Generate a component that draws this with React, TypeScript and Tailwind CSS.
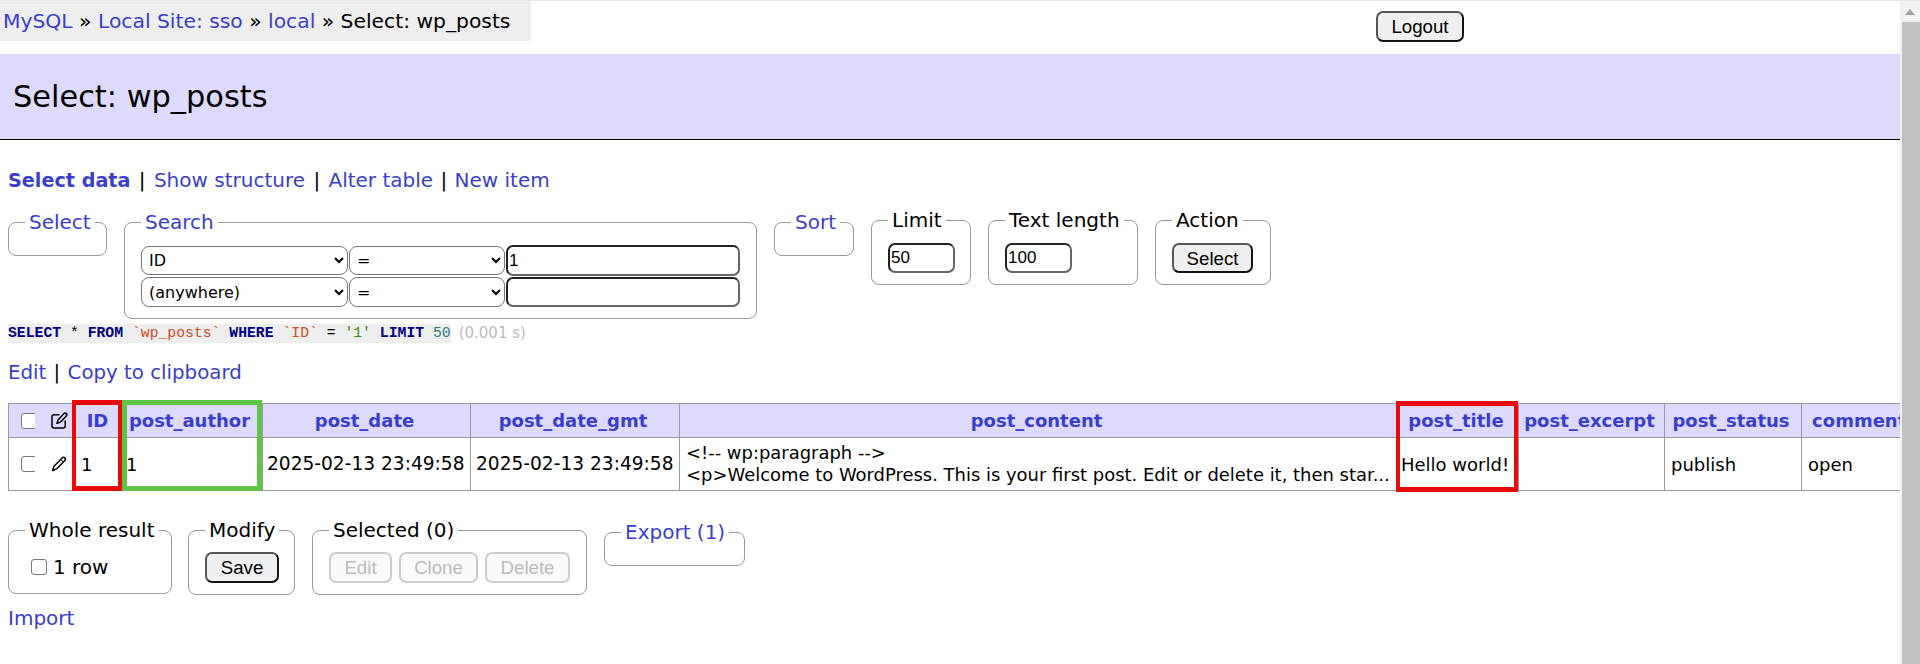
import type { ReactNode } from 'react'

const link = 'text-[#3a3ecb]'
const inputCls =
  "block rounded-[7px] border-2 border-[#222] border-r-[#666] border-b-[#666] bg-white px-[1px] font-['Liberation_Sans'] text-[17px] text-black outline-none"
const selectCls =
  "block h-[29px] rounded-[8px] border border-[#767676] bg-white pl-[3px] font-['DejaVu_Sans'] text-[16px] text-black"
const btnCls =
  "block h-[31px] rounded-[7px] border-2 border-[#555] border-r-[#111] border-b-[#111] bg-[#efefef] font-['Liberation_Sans'] text-[18.67px] text-black"
const disabledCls =
  "block h-[31px] rounded-[7px] border-2 border-[#ccc] bg-[#fafafa] font-['Liberation_Sans'] text-[18.67px] text-[#bbb]"
const checkCls = 'block size-4 appearance-none rounded-[3px] border-[1.5px] border-[#767676] bg-white'

function Field({ title, linked, className, children }: { title: string; linked?: boolean; className: string; children?: ReactNode }) {
  return (
    <fieldset className={`min-w-0 shrink-0 rounded-[8px] border border-[#999] pl-4 pr-2 pt-[13px] ${className}`}>
      <legend className={`whitespace-nowrap px-1 leading-[20px] ${linked ? link : ''}`}>{title}</legend>
      {children}
    </fieldset>
  )
}

function PencilIcon() {
  return (
    <svg viewBox="0 0 16 16" className="size-4" fill="none" stroke="black" strokeWidth="1.5" strokeLinejoin="round">
      <path d="M11.2 1.9a1.8 1.8 0 0 1 2.6 2.6L5.6 12.9 1.6 14.5 3 10.3z" />
      <path d="M9.8 3.5l2.6 2.6" strokeWidth="1" />
    </svg>
  )
}

function PencilSquareIcon() {
  return (
    <svg viewBox="0 0 17 17" className="size-[17px]" fill="none" stroke="black" strokeWidth="1.5" strokeLinejoin="round" strokeLinecap="round">
      <path d="M13 1.6a1.6 1.6 0 0 1 2.3 2.3L9.3 10.2 6 11.2l1-3.3z" />
      <path d="M8 2.8H3a2 2 0 0 0-2 2V14a2 2 0 0 0 2 2h9.2a2 2 0 0 0 2-2V9" />
    </svg>
  )
}

const headCols = ['post_date', 'post_date_gmt', 'post_content', 'post_title', 'post_excerpt', 'post_status']
const td = 'border border-[#999] px-[7px] align-middle whitespace-nowrap overflow-hidden'
const th = `border border-[#999] bg-[#dedafd] pl-[2px] pr-[6px] text-center font-bold whitespace-nowrap overflow-hidden ${link}`

function DataTable() {
  return (
    <div className="relative mx-2 mt-[19px] h-[88px] text-[18px]">
      <table className="w-[1973px] table-fixed border-collapse">
        <colgroup>
          <col className="w-[26px]" />
          <col className="w-[38px]" />
          <col className="w-[50px]" />
          <col className="w-[140px]" />
          <col className="w-[208px]" />
          <col className="w-[209px]" />
          <col className="w-[718px]" />
          <col className="w-[121px]" />
          <col className="w-[146px]" />
          <col className="w-[137px]" />
          <col className="w-[180px]" />
        </colgroup>
        <thead>
          <tr className="h-[34px]">
            <th className={`${th} border-r-0 !pl-[12px] !pr-0`}>
              <input type="checkbox" className={checkCls} />
            </th>
            <th className={`${th} border-l-0 !pl-[4px] !pr-0`}>
              <span className="ml-[12px] block"><PencilSquareIcon /></span>
            </th>
            <th className={`${th} !px-[4px]`}>ID</th>
            <th className={`${th} !pl-[2px] !pr-[8px]`}>post_author</th>
            {headCols.map((c) => (
              <th key={c} className={th}>{c}</th>
            ))}
            <th className={`${th} !pl-[8px] !pr-0`}>comment_status</th>
          </tr>
        </thead>
        <tbody>
          <tr className="h-[53px]">
            <td className={`${td} border-r-0 pl-[12px]`}>
              <input type="checkbox" className={checkCls} />
            </td>
            <td className={`${td} border-l-0 pl-[5px]`}>
              <span className="ml-[11px] block"><PencilIcon /></span>
            </td>
            <td className={`${td} !px-[8px]`}>1</td>
            <td className={`${td} !px-[3px]`}>1</td>
            <td className={`${td} !px-[4px] text-[18.6px]`}>2025-02-13 23:49:58</td>
            <td className={`${td} !px-[5px] text-[18.6px]`}>2025-02-13 23:49:58</td>
            <td className={`${td} !px-[6px] text-[17.95px] leading-[22px]`}>
              {'<!-- wp:paragraph -->'}
              <br />
              {'<p>Welcome to WordPress. This is your first post. Edit or delete it, then star...'}
            </td>
            <td className={`${td} !px-[3px]`}>Hello world!</td>
            <td className={td}></td>
            <td className={`${td} !px-[6px]`}>publish</td>
            <td className={`${td} !px-[6px]`}>open</td>
          </tr>
        </tbody>
      </table>
      {/* highlight boxes drawn over the table */}
      <div className="absolute left-[64px] top-[-3px] h-[91px] w-[50px] border-x-4 border-y-[5px] border-[#e90b0b]" />
      <div className="absolute left-[114px] top-[-3px] h-[91px] w-[140px] border-[5px] border-[#5fc443]" />
      <div className="absolute left-[1388px] top-[-2px] h-[91px] w-[122px] border-x-4 border-y-[5px] border-[#e90b0b]" />
    </div>
  )
}

function SqlLine() {
  return (
    <div className="mx-2 mt-[5px] flex h-[19px] items-center">
      <code className="bg-[#eee] font-['Liberation_Mono'] text-[14.75px] leading-[19px] whitespace-pre">
        <b className="text-[#000080]">SELECT</b> * <b className="text-[#000080]">FROM</b>{' '}
        <span className="text-[#d14a1e]">`wp_posts`</span> <b className="text-[#000080]">WHERE</b>{' '}
        <span className="text-[#d14a1e]">`ID`</span> = <span className="text-[#3a8a00]">'1'</span>{' '}
        <b className="text-[#000080]">LIMIT</b> <span className="text-[#2a8080]">50</span>
      </code>
      <span className="ml-[8px] text-[15px] text-[#bbb]">(0.001 s)</span>
    </div>
  )
}

export default function App() {
  return (
    <div className="flex h-[664px] overflow-hidden border-t border-[#e5e5e5] bg-white font-['DejaVu_Sans',sans-serif] text-[20px] text-black">
      <div className="min-w-0 flex-1 overflow-hidden">
        <div className="flex h-[53px] items-start">
          <div className="h-[40px] w-[531px] whitespace-nowrap bg-[#eee] pl-[3px] text-[20.3px] leading-[40px]">
            <span className={link}>MySQL</span> » <span className={link}>Local Site: sso</span> » <span className={link}>local</span> » Select: wp_posts
          </div>
          <button className={`${btnCls} ml-[845px] mt-[10px] w-[88px]`}>Logout</button>
        </div>

        <h1 className="flex h-[86px] items-center border-b border-black bg-[#dedafd] pl-[13px] text-[30.4px] font-normal">Select: wp_posts</h1>

        <p className="mx-2 mt-[29px] h-[22px] whitespace-pre leading-[22px]">
          <b className={`${link} text-[19.2px]`}>Select data</b> <span className="mx-[2px]">|</span> <span className={link}>Show structure</span>{' '}
          <span className="mx-[2px]">|</span> <span className={link}>Alter table</span> <span className="mx-[1px]">|</span>{' '}
          <span className={link}>New item</span>
        </p>

        <div className="mx-2 mt-[19px] flex h-[109px] items-start gap-[17px]">
          <Field title="Select" linked className="mt-[2px] h-[44px] w-[99px]" />
          <Field title="Search" linked className="mt-[2px] h-[107px] w-[633px]">
            <div className="flex h-[31px] items-center gap-[1px]">
              <select className={`${selectCls} w-[207px]`}><option>ID</option></select>
              <select className={`${selectCls} w-[156px]`}><option>=</option></select>
              <input defaultValue="1" className={`${inputCls} h-[31px] w-[234px]`} />
            </div>
            <div className="mt-[1px] flex h-[30px] items-center gap-[1px]">
              <select className={`${selectCls} !h-[30px] w-[207px]`}><option>(anywhere)</option></select>
              <select className={`${selectCls} !h-[30px] w-[156px]`}><option>=</option></select>
              <input className={`${inputCls} h-[30px] w-[234px]`} />
            </div>
          </Field>
          <Field title="Sort" linked className="mt-[2px] h-[44px] w-[80px]" />
          <Field title="Limit" className="h-[75px] w-[100px]">
            <input defaultValue="50" className={`${inputCls} h-[30px] w-[67px]`} />
          </Field>
          <Field title="Text length" className="h-[75px] w-[150px]">
            <input defaultValue="100" className={`${inputCls} h-[30px] w-[67px]`} />
          </Field>
          <Field title="Action" className="h-[75px] w-[116px]">
            <button className={`${btnCls} !h-[30px] w-[81px]`}>Select</button>
          </Field>
        </div>

        <SqlLine />

        <p className="mx-2 mt-[19px] h-[22px] whitespace-pre text-[19.8px] leading-[22px]">
          <span className={link}>Edit</span> <span className="mx-[1px]">|</span> <span className={link}>Copy to clipboard</span>
        </p>

        <DataTable />

        <div className="mx-2 mt-[29px] flex h-[75px] items-start gap-[16px]">
          <Field title="Whole result" className="h-[74px] w-[164px] !pt-[12px]">
            <label className="flex items-center gap-[6px] whitespace-nowrap">
              <input type="checkbox" className={`${checkCls} ml-[6px]`} />1 row
            </label>
          </Field>
          <Field title="Modify" className="h-[75px] w-[107px] !pt-[12px]">
            <button className={`${btnCls} w-[74px]`}>Save</button>
          </Field>
          <Field title="Selected (0)" className="ml-[1px] h-[75px] w-[275px] !pt-[12px]">
            <div className="flex gap-[7px]">
              <button disabled className={`${disabledCls} w-[63px]`}>Edit</button>
              <button disabled className={`${disabledCls} w-[79px]`}>Clone</button>
              <button disabled className={`${disabledCls} w-[85px]`}>Delete</button>
            </div>
          </Field>
          <Field title="Export (1)" linked className="ml-[1px] mt-[2px] h-[44px] w-[141px]" />
        </div>

        <p className={`mx-2 mt-[12px] h-[22px] leading-[22px] ${link}`}>Import</p>
      </div>

      {/* page scrollbar */}
      <div className="flex w-[20px] shrink-0 flex-col bg-[#f1f1f1]">
        <div className="flex h-[21px] items-center justify-center">
          <svg viewBox="0 0 10 6" className="h-[6px] w-[10px]">
            <path d="M5 0l5 6H0z" fill="#a3a3a3" />
          </svg>
        </div>
        <div className="ml-[2px] flex-1 bg-[#c1c1c1]" />
      </div>
    </div>
  )
}
